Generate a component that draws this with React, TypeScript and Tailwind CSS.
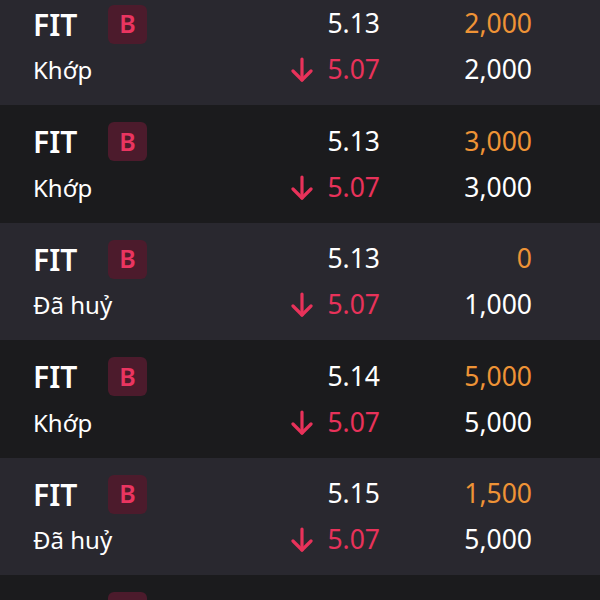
const orders = [
  { status: "Khớp", price: "5.13", ordered: "2,000", matched: "2,000" },
  { status: "Khớp", price: "5.13", ordered: "3,000", matched: "3,000" },
  { status: "Đã huỷ", price: "5.13", ordered: "0", matched: "1,000" },
  { status: "Khớp", price: "5.14", ordered: "5,000", matched: "5,000" },
  { status: "Đã huỷ", price: "5.15", ordered: "1,500", matched: "5,000" },
  { status: "Khớp", price: "5.15", ordered: "2,000", matched: "2,000" },
]

function DownArrow() {
  return (
    <svg width="22" height="26" viewBox="0 0 22 26" fill="none" stroke="#e8325a" strokeWidth="3.2" strokeLinecap="round" strokeLinejoin="round">
      <path d="M11 2v21" />
      <path d="M2 14l9 9 9-9" />
    </svg>
  )
}

export default function App() {
  return (
    <div className="h-[600px] w-[600px] overflow-hidden bg-[#1b1b1d] font-['Noto_Sans',sans-serif]">
      <div className="-mt-[12.5px] flex flex-col">
        {orders.map((o, i) => (
          <div
            key={i}
            className={`flex h-[117.5px] shrink-0 flex-col gap-[6px] pl-[33px] pr-[68px] pt-[16.5px] ${i % 2 === 0 ? "bg-[#29282f]" : "bg-[#1b1b1d]"}`}
          >
            <div className="flex h-10 items-center">
              <div className="w-[75px] text-[30px] font-semibold text-white">FIT</div>
              <div className="flex h-[39px] w-[39px] items-center justify-center rounded-md bg-[#4c1b2c] text-[25px] font-semibold text-[#ea3560]">
                B
              </div>
              <div className="flex-1 text-right text-[26.5px] text-white">{o.price}</div>
              <div className="w-[152px] text-right text-[26.5px] text-[#ee9336]">{o.ordered}</div>
            </div>
            <div className="flex h-10 items-center">
              <div className="flex-1 text-[24px] text-white">{o.status}</div>
              <div className="flex items-center gap-[14px]">
                <DownArrow />
                <span className="text-[26.5px] text-[#e8325a]">5.07</span>
              </div>
              <div className="w-[152px] text-right text-[26.5px] text-white">{o.matched}</div>
            </div>
          </div>
        ))}
      </div>
    </div>
  )
}
